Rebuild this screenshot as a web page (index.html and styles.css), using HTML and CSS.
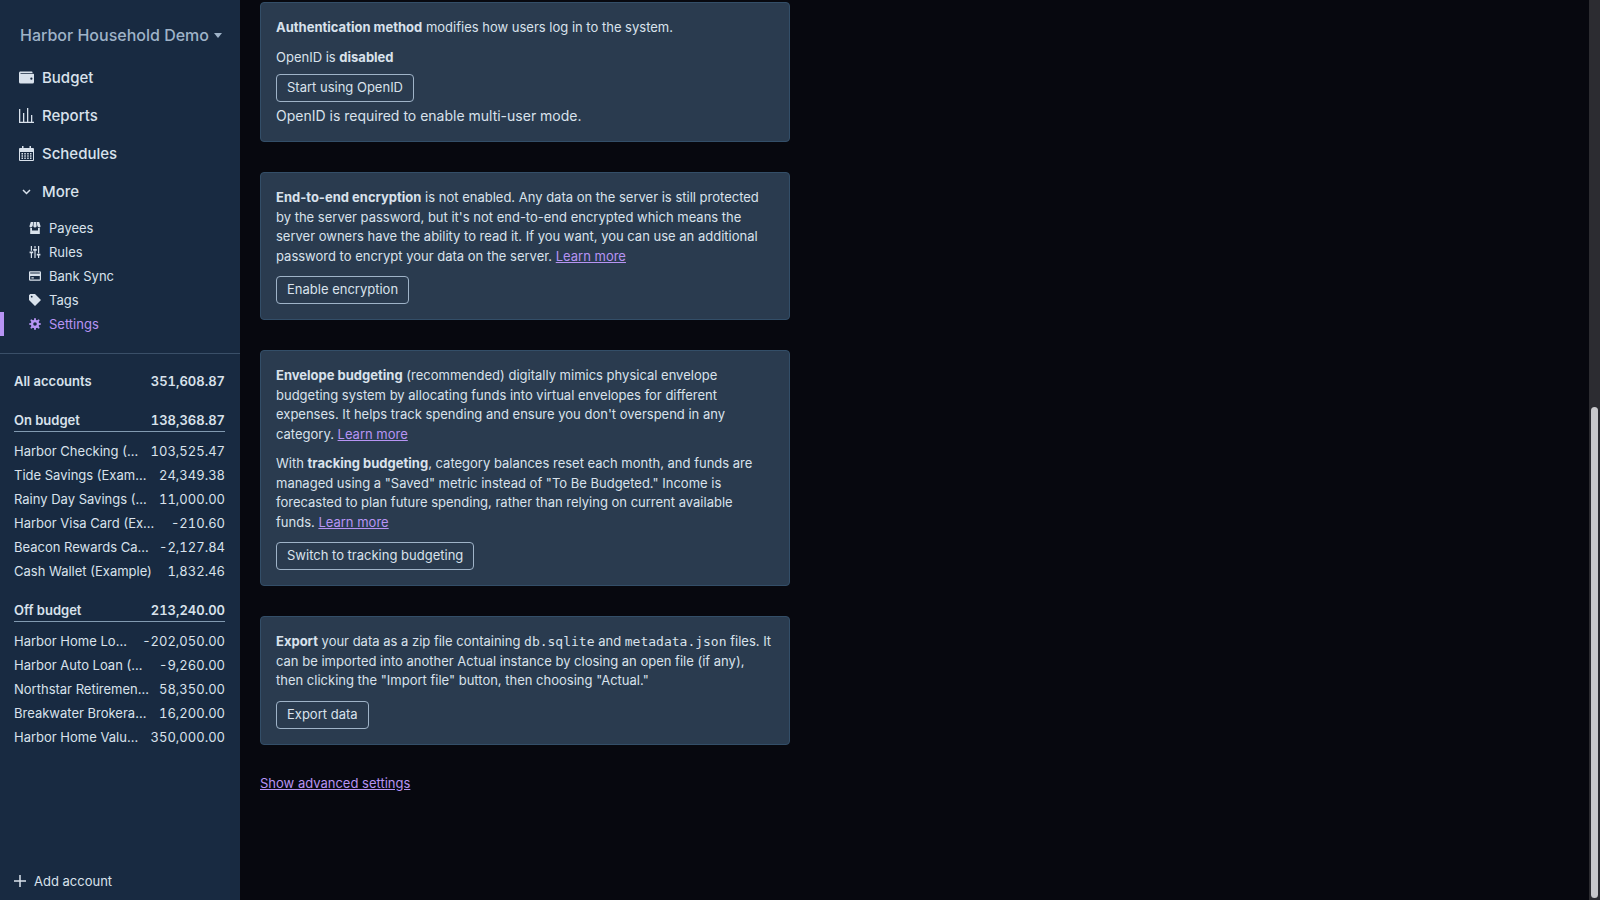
FILE: index.html
```
<!DOCTYPE html>
<html lang="en">
<head>
    <meta charset="UTF-8">
    <meta name="viewport" content="width=device-width, initial-scale=1.0">
    <title>Settings - Harbor Household Demo</title>
    <link rel="stylesheet" href="styles.css">
</head>
<body>
    <div class="app">
        <aside class="sidebar">
            <button type="button" class="budget-name">
                Harbor Household Demo
                <svg viewBox="0 0 8 5" width="8" height="5"><path d="M0 0h8L4 5z"/></svg>
            </button>

            <nav>
                <div class="primary">
                    <a href="#budget">
                        <svg viewBox="0 0 20 20"><path d="M0 4c0-1.1.9-2 2-2h15a1 1 0 0 1 1 1v1H2v1h17a1 1 0 0 1 1 1v10a2 2 0 0 1-2 2H2a2 2 0 0 1-2-2V4zm16.5 9a1.5 1.5 0 1 0 0-3 1.5 1.5 0 0 0 0 3z"/></svg>
                        Budget
                    </a>
                    <a href="#reports">
                        <svg viewBox="0 0 15 15"><path d="M0 1h1.300v13H0zM0 13.700h15V15H0zM4 5h1.300v9H4zM8 0h1.300v14H8zM12 7h1.300v7H12z"/></svg>
                        Reports
                    </a>
                    <a href="#schedules">
                        <svg viewBox="0 0 15 15"><path fill-rule="evenodd" d="M3 0h1.500v2h6V0H12v2h2a1 1 0 0 1 1 1v11a1 1 0 0 1-1 1H1a1 1 0 0 1-1-1V3a1 1 0 0 1 1-1h2zM1 6v8h13V6zM2.500 7H4v1.500H2.500zM5.300 7h1.500v1.500H5.300zM8.200 7h1.500v1.500H8.200zM11 7h1.500v1.500H11zM2.500 9.300H4v1.500H2.500zM5.300 9.300h1.500v1.500H5.300zM8.200 9.300h1.500v1.500H8.200zM11 9.300h1.500v1.500H11zM2.500 11.600H4v1.500H2.500zM5.300 11.600h1.500v1.500H5.300zM8.200 11.600h1.500v1.500H8.200zM11 11.600h1.500v1.500H11z"/></svg>
                        Schedules
                    </a>
                    <button type="button">
                        <svg viewBox="0 0 15 15"><path class="line" d="M4 6l3.500 3.500L11 6"/></svg>
                        More
                    </button>
                </div>
                <div class="secondary">
                    <a href="#payees">
                        <svg viewBox="0 0 20 20"><path d="M18 9.870V20H2V9.870a4.250 4.250 0 0 0 3-.38V14h10V9.500a4.260 4.260 0 0 0 3 .37zM3 0h4l-.67 6.030A3.430 3.430 0 0 1 3 9C1.340 9 .42 7.730.950 6.150L3 0zm5 0h4l.7 6.300c.17 1.500-.91 2.700-2.420 2.700h-.56A2.380 2.380 0 0 1 7.300 6.300L8 0zm5 0h4l2.050 6.150C19.580 7.730 18.650 9 17 9a3.420 3.420 0 0 1-3.330-2.970L13 0z"/></svg>
                        Payees
                    </a>
                    <a href="#rules">
                        <svg viewBox="0 0 20 20"><path d="M17 16v4h-2v-4h-2v-3h6v3h-2zM1 9h6v3H1V9zm6-4h6v3H7V5zM3 0h2v8H3V0zm12 0h2v12h-2V0zM9 0h2v4H9V0zM3 12h2v8H3v-8zm6-4h2v12H9V8z"/></svg>
                        Rules
                    </a>
                    <a href="#bank-sync">
                        <svg viewBox="0 0 20 20"><path d="M18 6V4H2v2h16zm0 4H2v6h16v-6zM0 4c0-1.100.9-2 2-2h16a2 2 0 0 1 2 2v12a2 2 0 0 1-2 2H2a2 2 0 0 1-2-2V4zm4 8h4v2H4v-2z"/></svg>
                        Bank Sync
                    </a>
                    <a href="#tags">
                        <svg viewBox="0 0 20 20"><path d="M0 10V2l2-2h8l10 10-10 10L0 10zm4.500-4a1.500 1.500 0 1 0 0-3 1.500 1.500 0 0 0 0 3z"/></svg>
                        Tags
                    </a>
                    <a href="#settings" class="active">
                        <svg viewBox="0 0 20 20"><path d="M3.940 6.500L2.220 3.640l1.420-1.420L6.500 3.940c.52-.3 1.100-.54 1.700-.7L9 0h2l.8 3.240c.6.16 1.180.4 1.700.7l2.860-1.720 1.420 1.420-1.720 2.860c.3.52.54 1.100.7 1.700L20 9v2l-3.240.8c-.16.6-.4 1.180-.7 1.700l1.720 2.860-1.420 1.420-2.860-1.720c-.52.3-1.100.54-1.700.7L11 20H9l-.8-3.240c-.6-.16-1.180-.4-1.700-.7l-2.860 1.720-1.420-1.420 1.720-2.860c-.3-.52-.54-1.100-.7-1.700L0 11V9l3.240-.8c.16-.6.4-1.180.7-1.700zM10 13a3 3 0 1 0 0-6 3 3 0 0 0 0 6z"/></svg>
                        Settings
                    </a>
                </div>
            </nav>

            <div class="accounts">
                <a href="#all" class="total"><span>All accounts</span><b>351,608.87</b></a>

                <a href="#on-budget" class="total group"><span>On budget</span><b>138,368.87</b></a>
                <a href="#a1"><span>Harbor Checking (Example)</span><b>103,525.47</b></a>
                <a href="#a2"><span>Tide Savings (Example)</span><b>24,349.38</b></a>
                <a href="#a3"><span>Rainy Day Savings (Example)</span><b>11,000.00</b></a>
                <a href="#a4"><span>Harbor Visa Card (Example)</span><b>-210.60</b></a>
                <a href="#a5"><span>Beacon Rewards Card (Example)</span><b>-2,127.84</b></a>
                <a href="#a6"><span>Cash Wallet (Example)</span><b>1,832.46</b></a>

                <a href="#off-budget" class="total group"><span>Off budget</span><b>213,240.00</b></a>
                <a href="#a7"><span>Harbor Home Loan (Example)</span><b>-202,050.00</b></a>
                <a href="#a8"><span>Harbor Auto Loan (Example)</span><b>-9,260.00</b></a>
                <a href="#a9"><span>Northstar Retirement (Example)</span><b>58,350.00</b></a>
                <a href="#a10"><span>Breakwater Brokerage (Example)</span><b>16,200.00</b></a>
                <a href="#a11"><span>Harbor Home Value (Example)</span><b>350,000.00</b></a>
            </div>

            <button type="button" class="add-account">
                <svg viewBox="0 0 12 12" width="12" height="12"><path class="line" d="M6 0v12M0 6h12"/></svg>
                Add account
            </button>
        </aside>

        <main class="settings">
            <section class="card">
                <p><strong>Authentication method</strong> modifies how users log in to the system.</p>
                <p>OpenID is <strong>disabled</strong></p>
                <button type="button" class="btn btn-close">Start using OpenID</button>
                <div class="note">OpenID is required to enable multi-user mode.</div>
            </section>

            <section class="card">
                <p><strong>End-to-end encryption</strong> is not enabled. Any data on the server is still protected by the server password, but it's not end-to-end encrypted which means the server owners have the ability to read it. If you want, you can use an additional password to encrypt your data on the server. <a href="#encryption">Learn more</a></p>
                <button type="button" class="btn">Enable encryption</button>
            </section>

            <section class="card">
                <p><strong>Envelope budgeting</strong> (recommended) digitally mimics physical envelope budgeting system by allocating funds into virtual envelopes for different expenses. It helps track spending and ensure you don't overspend in any category. <a href="#envelope">Learn more</a></p>
                <p>With <strong>tracking budgeting</strong>, category balances reset each month, and funds are managed using a "Saved" metric instead of "To Be Budgeted." Income is forecasted to plan future spending, rather than relying on current available funds. <a href="#tracking">Learn more</a></p>
                <button type="button" class="btn">Switch to tracking budgeting</button>
            </section>

            <section class="card">
                <p><strong>Export</strong> your data as a zip file containing <code>db.sqlite</code> and <code>metadata.json</code> files. It can be imported into another Actual instance by closing an open file (if any), then clicking the "Import file" button, then choosing "Actual."</p>
                <button type="button" class="btn">Export data</button>
            </section>

            <a href="#advanced" class="advanced">Show advanced settings</a>
        </main>

        <div class="scroll-track"><div class="scroll-thumb"></div></div>
    </div>
</body>
</html>
```
FILE: styles.css
```
* {
    box-sizing: border-box;
}
body {
    margin: 0;
    font-family: Inter, sans-serif;
    font-size: 13px;
    color: #d9e2ec;
    background-color: #07080f;
}
button {
    font: inherit;
    color: inherit;
    background: none;
    border: none;
    padding: 0;
    cursor: pointer;
}
a {
    color: #b794f4;
}
svg {
    fill: currentColor;
    flex-shrink: 0;
}
.line {
    fill: none;
    stroke: currentColor;
    stroke-width: 1.5;
}
.app {
    display: flex;
    height: 100vh;
    overflow: hidden;
}

/* Sidebar */
.sidebar {
    width: 240px;
    flex-shrink: 0;
    display: flex;
    flex-direction: column;
    background-color: #182a41;
}
.sidebar a {
    color: inherit;
    text-decoration: none;
}
.budget-name {
    display: flex;
    align-items: center;
    gap: 5px;
    padding: 25px 0 13px 20px;
    line-height: 20px;
    font-size: 16px;
    font-weight: 500;
    white-space: nowrap;
    color: #9fb3c8;
}
.primary a, .primary button {
    display: flex;
    align-items: center;
    gap: 8px;
    width: 100%;
    height: 38px;
    padding: 0 19px;
    font-size: 15px;
    font-weight: 500;
}
.primary svg {
    width: 15px;
    height: 15px;
}
.secondary {
    padding: 6px 0 17px;
    border-bottom: 1px solid #3a4f68;
}
.secondary a {
    display: flex;
    align-items: center;
    gap: 8px;
    height: 24px;
    padding-left: 25px;
    border-left: 4px solid transparent;
}
.secondary svg {
    width: 12px;
    height: 12px;
}
.secondary .active {
    color: #b794f4;
    border-left-color: #b794f4;
}
.accounts {
    flex: 1;
    padding: 15px 15px 0 14px;
}
.accounts a {
    display: flex;
    align-items: center;
    gap: 10px;
    height: 24px;
}
.accounts span {
    flex: 1;
    overflow: hidden;
    white-space: nowrap;
    text-overflow: ellipsis;
}
.accounts b {
    font-weight: 400;
    font-feature-settings: "tnum";
}
.accounts .total, .accounts .total b {
    font-weight: 600;
}
.accounts .group {
    margin: 15px 0 7px;
    border-bottom: 1px solid #829ab1;
}
.add-account {
    display: flex;
    align-items: center;
    gap: 8px;
    padding: 0 14px 9px;
    line-height: 20px;
}

/* Settings page */
.settings {
    flex: 1;
    display: flex;
    flex-direction: column;
    align-items: flex-start;
    gap: 30px;
    padding: 2px 20px;
    line-height: 1.5;
}
.card {
    width: 100%;
    max-width: 530px;
    padding: 15px;
    background-color: #2a3b4f;
    border: 1px solid #334e68;
    border-radius: 4px;
}
.card p {
    margin: 0 0 10px;
}
.card strong {
    font-weight: 700;
}
.card code {
    font-family: "DejaVu Sans Mono", monospace;
    font-size: 13px;
    line-height: 1;
}
.btn {
    display: block;
    height: 28px;
    padding: 0 10px;
    border: 1px solid #9fb3c8;
    border-radius: 4px;
}
.btn-close {
    margin-top: -3px;
}
.note {
    margin-top: 4px;
    font-size: 14px;
    line-height: 20px;
}
.advanced {
    line-height: 16px;
}

/* Scrollbar */
.scroll-track {
    display: flex;
    align-items: flex-end;
    width: 11px;
    padding: 2px;
    background-color: #2c2c31;
}
.scroll-thumb {
    width: 100%;
    height: 54.8%;
    border-radius: 4px;
    background-color: #c8c8cb;
}
```
